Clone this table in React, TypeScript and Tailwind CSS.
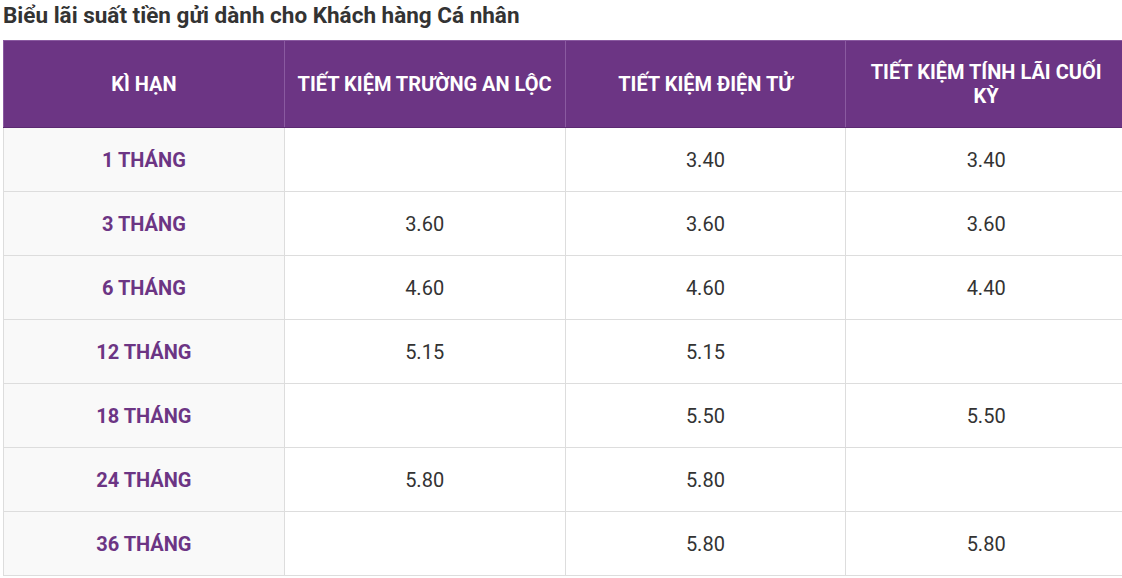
const headers = ['KÌ HẠN', 'TIẾT KIỆM TRƯỜNG AN LỘC', 'TIẾT KIỆM ĐIỆN TỬ', 'TIẾT KIỆM TÍNH LÃI CUỐI KỲ'];

const rows: [string, string, string, string][] = [
  ['1 THÁNG', '', '3.40', '3.40'],
  ['3 THÁNG', '3.60', '3.60', '3.60'],
  ['6 THÁNG', '4.60', '4.60', '4.40'],
  ['12 THÁNG', '5.15', '5.15', ''],
  ['18 THÁNG', '', '5.50', '5.50'],
  ['24 THÁNG', '5.80', '5.80', ''],
  ['36 THÁNG', '', '5.80', '5.80'],
];

export default function App() {
  return (
    <div className="w-[1122px] h-[578px] overflow-hidden bg-white font-['Roboto',sans-serif]">
      <h2 className="pl-[3px] h-[40px] text-[22.5px] leading-[30px] font-bold text-[#333333]">
        Biểu lãi suất tiền gửi dành cho Khách hàng Cá nhân
      </h2>
      <table className="ml-[3px] w-[1124px] table-fixed border-collapse">
        <thead>
          <tr className="h-[87px] bg-[#6c3584]">
            {headers.map((h) => (
              <th
                key={h}
                className="border border-[#8a5aa0] border-b-[#5c2a72] px-[10px] text-center text-[20px] leading-[24px] font-bold text-white"
              >
                {h}
              </th>
            ))}
          </tr>
        </thead>
        <tbody>
          {rows.map((r) => (
            <tr key={r[0]} className="h-[64px]">
              <td className="border border-[#dddddd] bg-[#f9f9f9] text-center text-[20px] font-bold text-[#6c3584]">
                {r[0]}
              </td>
              {r.slice(1).map((v, i) => (
                <td key={i} className="border border-[#dddddd] text-center text-[20px] text-[#333333]">
                  {v}
                </td>
              ))}
            </tr>
          ))}
        </tbody>
      </table>
    </div>
  );
}
